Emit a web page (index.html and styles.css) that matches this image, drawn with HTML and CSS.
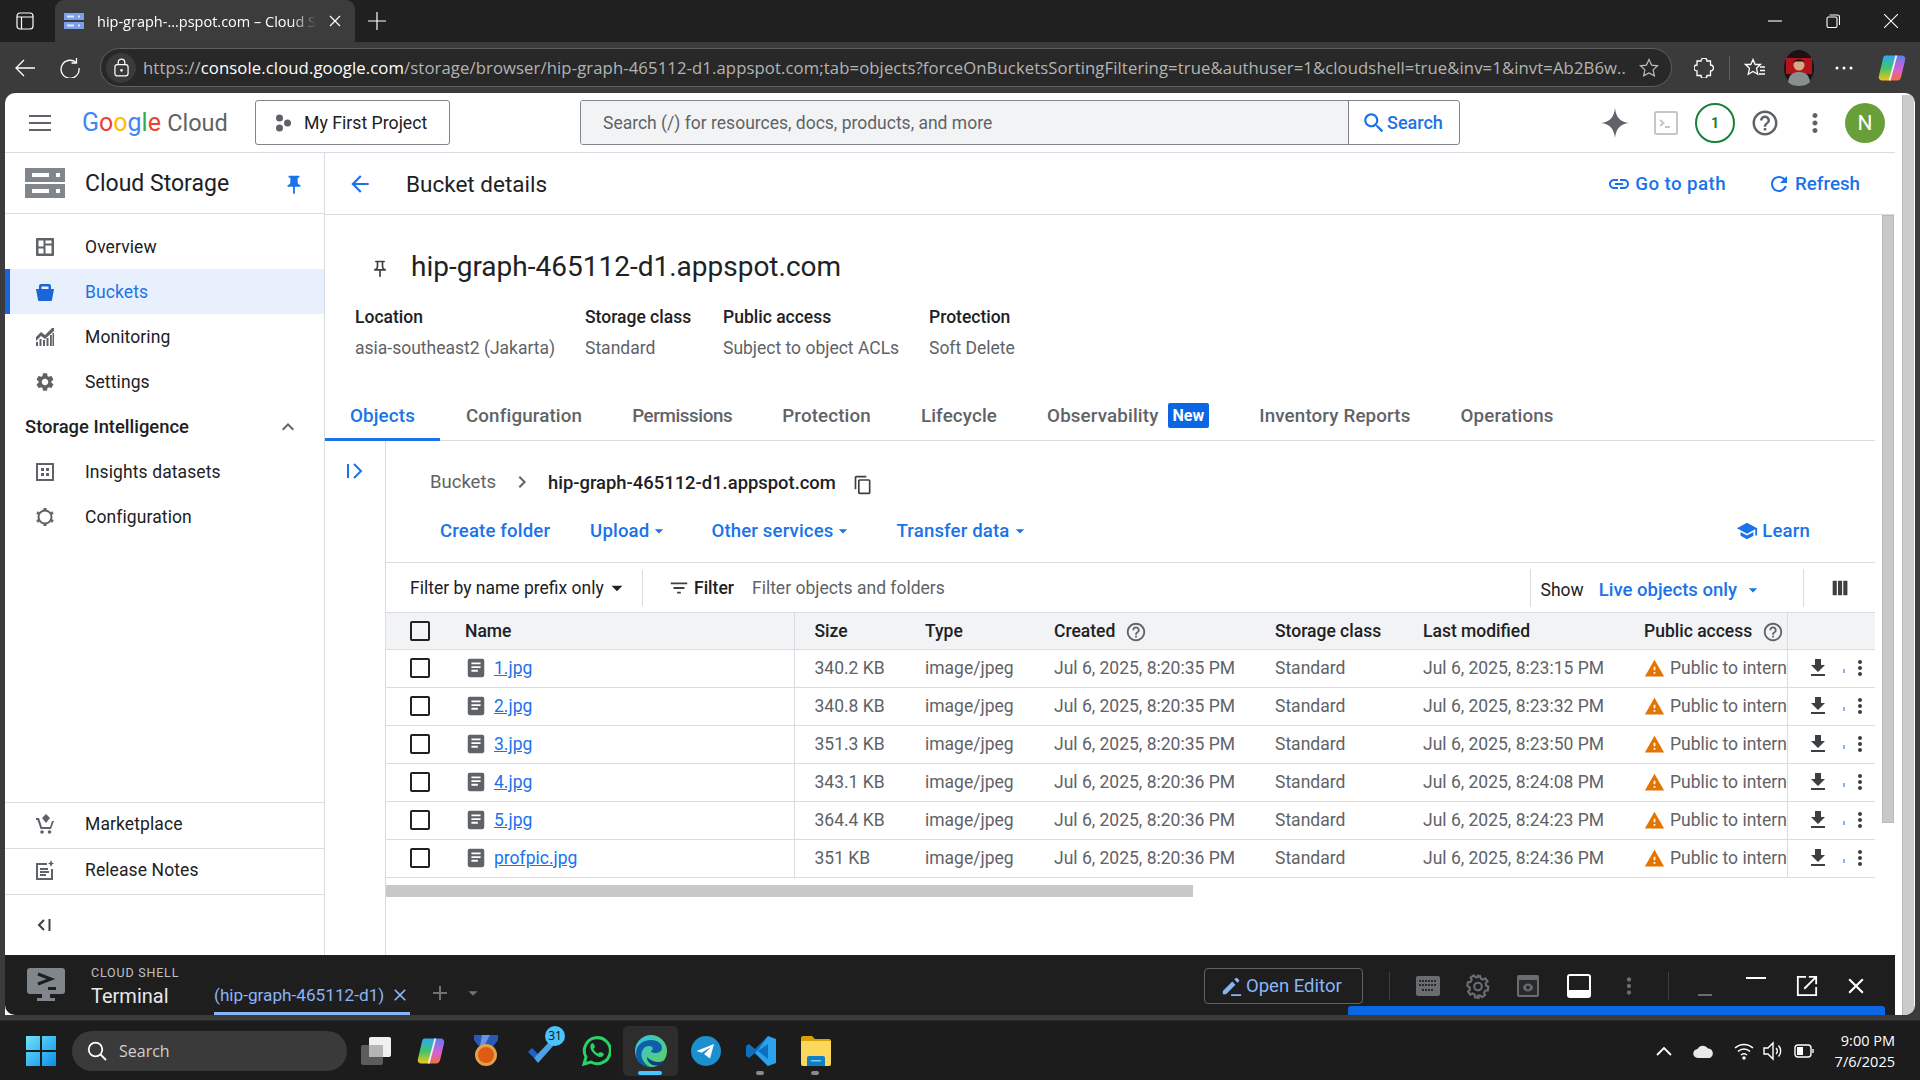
FILE: index.html
```html
<!DOCTYPE html>
<html lang="en">
<head>
    <meta charset="UTF-8">
    <title>hip-graph-465112-d1.appspot.com – Cloud Storage</title>
    <link rel="stylesheet" href="styles.css">
</head>
<body>
    <svg class="defs" width="0" height="0">
        <defs>
            <linearGradient id="cp1" x1="0" y1="0" x2="0" y2="1"><stop offset="0" stop-color="#2fa8f0"/><stop offset=".5" stop-color="#3fc46c"/><stop offset="1" stop-color="#f5c518"/></linearGradient>
            <linearGradient id="cp2" x1="0" y1="0" x2="0" y2="1"><stop offset="0" stop-color="#5f7cf2"/><stop offset=".55" stop-color="#d75fd6"/><stop offset="1" stop-color="#f2713a"/></linearGradient>
        </defs>
        <symbol id="i-copilot" viewBox="0 0 29 32"><path fill="url(#cp1)" d="M8 3h11l-7 26H5c-3 0-5-2-4-5L5 7c.5-2.500 1-4 3-4z"/><path fill="url(#cp2)" d="M19 3h5c3 0 5 2 4 5l-4 17c-.5 2.500-2 4-4 4h-8z"/><path stroke="#f4f1f6" stroke-width="1.800" d="M19 3l-7 26"/></symbol>
        <symbol id="i-more" viewBox="0 0 24 24"><path d="M12 8c1.100 0 2-.9 2-2s-.9-2-2-2-2 .9-2 2 .9 2 2 2zm0 2c-1.100 0-2 .9-2 2s.9 2 2 2 2-.9 2-2-.9-2-2-2zm0 6c-1.100 0-2 .9-2 2s.9 2 2 2 2-.9 2-2-.9-2-2-2z"/></symbol>
        <symbol id="i-help" viewBox="0 0 24 24"><path d="M11 18h2v-2h-2v2zm1-16C6.480 2 2 6.480 2 12s4.480 10 10 10 10-4.480 10-10S17.520 2 12 2zm0 18c-4.410 0-8-3.590-8-8s3.590-8 8-8 8 3.590 8 8-3.590 8-8 8zm0-14c-2.210 0-4 1.790-4 4h2c0-1.100.9-2 2-2s2 .9 2 2c0 2-3 1.750-3 5h2c0-2.250 3-2.500 3-5 0-2.210-1.790-4-4-4z"/></symbol>
        <symbol id="i-download" viewBox="0 0 24 24"><path d="M19 9h-4V3H9v6H5l7 7 7-7zM5 18v2h14v-2H5z"/></symbol>
        <symbol id="i-warning" viewBox="0 0 24 24"><path d="M1 21h22L12 2 1 21zm12-3h-2v-2h2v2zm0-4h-2v-4h2v4z"/></symbol>
        <symbol id="i-file" viewBox="0 0 24 24"><path fill-rule="evenodd" d="M5 2h14a2 2 0 0 1 2 2v16a2 2 0 0 1-2 2H5a2 2 0 0 1-2-2V4a2 2 0 0 1 2-2zm2 4v2h10V6H7zm0 4v2h10v-2H7zm0 4v2h7v-2H7z"/></symbol>
        <symbol id="i-caret" viewBox="0 0 24 24"><path d="M7 10l5 5 5-5z"/></symbol>
        <symbol id="i-close" viewBox="0 0 24 24"><path d="M19 6.410L17.590 5 12 10.590 6.410 5 5 6.410 10.590 12 5 17.590 6.410 19 12 13.410 17.590 19 19 17.590 13.410 12z"/></symbol>
        <symbol id="i-gear" viewBox="0 0 24 24"><path d="M19.140 12.940c.04-.3.06-.61.06-.94 0-.32-.02-.64-.07-.94l2.030-1.580c.18-.14.23-.41.12-.61l-1.920-3.320c-.12-.22-.37-.29-.59-.22l-2.390.96c-.5-.38-1.030-.7-1.620-.94l-.36-2.540c-.04-.24-.24-.41-.48-.41h-3.840c-.24 0-.43.17-.47.41l-.36 2.540c-.59.24-1.130.57-1.620.94l-2.390-.96c-.22-.08-.47 0-.59.22L2.740 8.870c-.12.21-.08.47.12.61l2.030 1.580c-.05.3-.09.63-.09.94s.02.64.07.94l-2.030 1.580c-.18.14-.23.41-.12.61l1.920 3.320c.12.22.37.29.59.22l2.390-.96c.5.38 1.030.7 1.620.94l.36 2.540c.05.24.24.41.48.41h3.840c.24 0 .44-.17.47-.41l.36-2.540c.59-.24 1.130-.56 1.620-.94l2.390.96c.22.08.47 0 .59-.22l1.920-3.320c.12-.22.07-.47-.12-.61l-2.010-1.580zM12 15.600c-1.980 0-3.600-1.620-3.600-3.600s1.620-3.600 3.600-3.600 3.600 1.620 3.600 3.600-1.620 3.600-3.600 3.600z"/></symbol>
    </svg>

    <div class="tabstrip">
        <svg class="tab-panel-icon" viewBox="0 0 18 18" width="18" height="18" fill="none" stroke="#fff" stroke-width="1.200"><rect x="1" y="1" width="16" height="16" rx="3"/><path d="M1 5h16M5.500 5v12"/></svg>
        <div class="tab">
            <svg viewBox="0 0 20 16" width="20" height="16"><rect width="20" height="7" fill="#7b9fe8"/><rect y="9" width="20" height="7" fill="#7b9fe8"/><rect x="3" y="2.500" width="7" height="2" fill="#dfe8fb"/><rect x="3" y="11.500" width="7" height="2" fill="#dfe8fb"/><rect x="14" y="2.500" width="2" height="2" fill="#dfe8fb"/><rect x="14" y="11.500" width="2" height="2" fill="#dfe8fb"/></svg>
            <span class="tab-title">hip-graph-...pspot.com – Cloud Storage</span>
            <svg class="tab-close" viewBox="0 0 12 12" width="12" height="12" stroke="#fff" stroke-width="1.200"><path d="M1 1l10 10M11 1L1 11"/></svg>
        </div>
        <svg class="new-tab" viewBox="0 0 18 18" width="18" height="18" stroke="#fff" stroke-width="1.200"><path d="M9 0v18M0 9h18"/></svg>
        <div class="win-controls">
            <svg viewBox="0 0 14 14" width="14" height="14" stroke="#fff" stroke-width="1.100"><path d="M0 7h14"/></svg>
            <svg viewBox="0 0 14 14" width="14" height="14" fill="none" stroke="#fff" stroke-width="1.100"><rect x="1" y="3" width="10" height="10.500" rx="1.500"/><path d="M3.500 1h8a2 2 0 0 1 2 2v8"/></svg>
            <svg viewBox="0 0 14 14" width="14" height="14" stroke="#fff" stroke-width="1.100"><path d="M0 0l14 14M14 0L0 14"/></svg>
        </div>
    </div>

    <div class="addressbar">
        <svg class="nav-back" viewBox="0 0 20 20" width="20" height="20" fill="none" stroke="#fff" stroke-width="1.300"><path d="M20 10H1M9 2l-8 8 8 8"/></svg>
        <svg class="nav-reload" viewBox="0 0 20 20" width="20" height="20" fill="none" stroke="#fff" stroke-width="1.300"><path d="M16 4.500A9 9 0 1 0 19 10"/><path d="M16.500 0v5h-5"/></svg>
        <div class="urlbox">
            <span class="lock-wrap"><svg viewBox="0 0 16 20" width="15" height="19" fill="none" stroke="#fff" stroke-width="1.300"><rect x="1" y="7" width="14" height="12" rx="2.500"/><path d="M4.500 7V4.500a3.500 3.500 0 0 1 7 0V7"/><circle cx="8" cy="13" r=".8" fill="#fff"/></svg></span>
            <span class="url"><span class="url-dim">https://</span>console.cloud.google.com<span class="url-dim">/storage/browser/hip-graph-465112-d1.appspot.com;tab=objects?forceOnBucketsSortingFiltering=true&amp;authuser=1&amp;cloudshell=true&amp;inv=1&amp;invt=Ab2B6w...</span></span>
            <svg class="url-star" viewBox="0 0 20 20" width="20" height="20" fill="none" stroke="#bdbdbd" stroke-width="1.200"><path d="M10 1.500l2.600 5.600 6 .7-4.500 4.100 1.300 6L10 15l-5.400 2.900 1.300-6L1.400 7.800l6-.7z"/></svg>
        </div>
        <div class="browser-tools">
            <svg class="tool-ext" viewBox="0 0 20 20" width="20" height="20" fill="none" stroke="#fff" stroke-width="1.300"><path d="M7 3a3 3 0 0 1 6 0h3.500v4a3 3 0 0 1 0 6v4.500H13a3 3 0 0 1-6 0H3V13a3 3 0 0 1 0-6V3z"/></svg>
            <span class="tool-sep"></span>
            <svg class="tool-fav" viewBox="0 0 22 20" width="22" height="20" fill="none" stroke="#fff" stroke-width="1.300"><path d="M9 1.500l2.200 5h5.300l-4 3.800 1.300 6L9 13.500l-4.800 2.800 1.300-6-4-3.800h5.300z"/><path d="M16 9h5M16 12.500h5M15 16h6"/></svg>
            <svg class="tool-avatar" viewBox="0 0 30 36" width="30" height="36"><ellipse cx="15" cy="18" rx="15" ry="18" fill="#1a1214"/><path d="M2 8h26v16H2z" fill="#b3141c"/><path d="M4 32c1-8 6-10 11-10s10 2 11 10c-3 3-7 4-11 4s-8-1-11-4z" fill="#87908f"/><circle cx="15" cy="15" r="5.500" fill="#d7a987"/><path d="M9.500 13c0-5 11-5 11 0l-2-1.500h-7z" fill="#201611"/></svg>
            <svg class="tool-dots" viewBox="0 0 18 4" width="18" height="4" fill="#fff"><circle cx="2" cy="2" r="1.500"/><circle cx="9" cy="2" r="1.500"/><circle cx="16" cy="2" r="1.500"/></svg>
            <svg class="tool-copilot" viewBox="0 0 29 32" width="28" height="32"><use href="#i-copilot"/></svg>
        </div>
    </div>

    <div class="window">
        <div class="window-main">
            <div class="topbar">
                <svg class="hamburger" viewBox="0 0 24 16" width="24" height="16" fill="#5f6368"><path d="M1 0h22v2H1zM1 7h22v2H1zM1 14h22v2H1z"/></svg>
                <div class="logo"><span class="lg-b">G</span><span class="lg-r">o</span><span class="lg-y">o</span><span class="lg-b">g</span><span class="lg-g">l</span><span class="lg-r">e</span> <span class="lg-cloud">Cloud</span></div>
                <button class="project-btn">
                    <svg viewBox="0 0 18 18" width="18" height="18" fill="#5f6368"><circle cx="5.500" cy="4" r="3.500"/><circle cx="13.500" cy="9" r="3.500"/><circle cx="5.500" cy="14" r="3.500"/></svg>
                    My First Project
                </button>
                <div class="searchbox">
                    <div class="search-field">Search (/) for resources, docs, products, and more</div>
                    <div class="search-btn">
                        <svg viewBox="0 0 24 24" width="26" height="26" fill="#1a73e8"><path d="M15.500 14h-.79l-.28-.27C15.410 12.590 16 11.110 16 9.500 16 5.910 13.090 3 9.500 3S3 5.910 3 9.500 5.910 16 9.500 16c1.610 0 3.090-.59 4.230-1.570l.27.28v.79l5 4.990L20.490 19l-4.990-5zm-6 0C7.010 14 5 11.990 5 9.500S7.010 5 9.500 5 14 7.010 14 9.500 11.990 14 9.500 14z"/></svg>
                        Search
                    </div>
                </div>
                <div class="top-icons">
                    <svg class="top-spark" viewBox="0 0 28 30" width="28" height="30" fill="#5f6368"><path d="M14 0c1 9 5 14 14 15-9 1-13 6-14 15-1-9-5-14-14-15 9-1 13-6 14-15z"/></svg>
                    <svg class="top-term" viewBox="0 0 24 24" width="24" height="24" fill="none" stroke="#c4c6c8" stroke-width="2"><rect x="1" y="1" width="22" height="22" rx="1.500"/><path d="M6 9l3.500 3L6 15M11 16h5"/></svg>
                    <div class="top-badge">1</div>
                    <svg class="top-help" viewBox="0 0 24 24" width="30" height="30" fill="#5f6368"><use href="#i-help"/></svg>
                    <svg class="top-more" viewBox="0 0 24 24" width="30" height="30" fill="#5f6368"><use href="#i-more"/></svg>
                    <div class="top-avatar">N</div>
                </div>
            </div>

            <div class="workspace">
                <aside class="sidebar">
                    <div class="side-head">
                        <svg viewBox="0 0 40 30" width="40" height="30"><rect width="40" height="14" fill="#80868b"/><rect y="16" width="40" height="14" fill="#80868b"/><rect x="7" y="5" width="17" height="4" fill="#fff"/><rect x="7" y="21" width="17" height="4" fill="#fff"/><rect x="31" y="5" width="4" height="4" fill="#fff"/><rect x="31" y="21" width="4" height="4" fill="#fff"/></svg>
                        <span class="side-title">Cloud Storage</span>
                        <svg class="side-pin" viewBox="0 0 24 24" width="22" height="22" fill="#1a73e8"><path d="M16 9V4h1c.55 0 1-.45 1-1s-.45-1-1-1H7c-.55 0-1 .45-1 1s.45 1 1 1h1v5c0 1.660-1.340 3-3 3v2h5.970v7l1 1 1-1v-7H19v-2c-1.660 0-3-1.340-3-3z"/></svg>
                    </div>
                    <nav class="side-nav">
                        <a class="nav-item">
                            <svg viewBox="0 0 18 18" width="18" height="18"><path fill="#5f6368" fill-rule="evenodd" d="M1 0h16a1 1 0 0 1 1 1v16a1 1 0 0 1-1 1H1a1 1 0 0 1-1-1V1a1 1 0 0 1 1-1zm1.500 2.500v6h5v-6h-5zm7 0v3h6v-3h-6zm0 5v8h6v-8h-6zm-7 3v5h5v-5h-5z"/></svg>
                            Overview
                        </a>
                        <a class="nav-item nav-active">
                            <svg viewBox="0 0 18 18" width="18" height="18" fill="#1a66d9"><path d="M0 6h18l-2 11a1 1 0 0 1-1 1H3a1 1 0 0 1-1-1z"/><path d="M3 6V3a2 2 0 0 1 2-2h8a2 2 0 0 1 2 2v3h-2.500V3.500h-7V6z"/></svg>
                            Buckets
                        </a>
                        <a class="nav-item">
                            <svg viewBox="0 0 18 18" width="18" height="18" fill="#5f6368"><path d="M0 9l5-5 4 3 7-7 2 0v3l-9 8-4-3-5 5z"/><path d="M0 14h2v4H0zM3.500 11h2v7h-2zM7 12h2v6H7zM10.500 10h2v8h-2zM14 7h1.800v11H14zM16.500 5H18v13h-1.500z"/></svg>
                            Monitoring
                        </a>
                        <a class="nav-item">
                            <svg viewBox="2 2 20 20" width="18" height="18" fill="#5f6368"><use href="#i-gear" x="0" y="0" width="24" height="24"/></svg>
                            Settings
                        </a>
                        <div class="nav-group">
                            Storage Intelligence
                            <svg viewBox="0 0 24 24" width="24" height="24" fill="#5f6368"><path d="M12 8l-6 6 1.410 1.410L12 10.830l4.590 4.580L18 14z"/></svg>
                        </div>
                        <a class="nav-item">
                            <svg viewBox="0 0 18 18" width="18" height="18"><path fill="#5f6368" fill-rule="evenodd" d="M0 0h18v18H0zM2 2v14h14V2zM5 5h3v3H5zM10 5h3v3h-3zM5 10h3v3H5zM10 10h3v3h-3z"/></svg>
                            Insights datasets
                        </a>
                        <a class="nav-item">
                            <svg viewBox="0 0 18 18" width="18" height="18" fill="none" stroke="#5f6368" stroke-width="2"><circle cx="9" cy="9" r="6.500"/><path stroke-width="3" d="M9 0v2M9 16v2M1 4.500l1.700 1M15.300 12.500l1.700 1M1 13.500l1.700-1M15.300 5.500l1.700-1"/></svg>
                            Configuration
                        </a>
                    </nav>
                    <div class="side-bottom">
                        <a class="nav-item nav-line">
                            <svg viewBox="0 0 18 20" width="18" height="20" fill="#5f6368"><path d="M10 0l4 4-4 5-4-5z"/><path d="M0 4h3l3 9h8l2-6h2l-3 8H4.500L1.500 6H0z"/><circle cx="6" cy="18" r="1.800"/><circle cx="13.500" cy="18" r="1.800"/></svg>
                            Marketplace
                        </a>
                        <a class="nav-item nav-line">
                            <svg viewBox="0 0 18 20" width="18" height="20" fill="none" stroke="#5f6368" stroke-width="2"><path d="M11 4H1v15h15V9"/><path d="M4 9h8M4 12h9M4 15h6"/><path fill="#5f6368" stroke="none" d="M15 0l1 2.500L18 3.500 16 4.500 15 7l-1-2.500-2-1 2-1z"/></svg>
                            Release Notes
                        </a>
                        <div class="side-collapse">
                            <svg viewBox="0 0 14 14" width="14" height="14" fill="none" stroke="#3c4043" stroke-width="2"><path d="M7 2L2 7l5 5M12.500 1v12"/></svg>
                        </div>
                    </div>
                </aside>

                <div class="content">
                    <div class="content-head">
                        <svg class="back" viewBox="0 0 24 24" width="26" height="26" fill="#1a73e8"><path d="M20 11H7.830l5.590-5.590L12 4l-8 8 8 8 1.410-1.410L7.830 13H20v-2z"/></svg>
                        <h1 class="page-title">Bucket details</h1>
                        <a class="head-link">
                            <svg viewBox="0 0 24 24" width="24" height="24" fill="#1a73e8"><path d="M3.900 12c0-1.710 1.390-3.100 3.100-3.100h4V7H7c-2.760 0-5 2.240-5 5s2.240 5 5 5h4v-1.900H7c-1.710 0-3.100-1.390-3.100-3.100zM8 13h8v-2H8v2zm9-6h-4v1.900h4c1.710 0 3.100 1.390 3.100 3.100s-1.390 3.100-3.100 3.100h-4V17h4c2.760 0 5-2.240 5-5s-2.240-5-5-5z"/></svg>
                            Go to path
                        </a>
                        <a class="head-link head-refresh">
                            <svg viewBox="0 0 24 24" width="24" height="24" fill="#1a73e8"><path d="M17.650 6.350C16.200 4.900 14.210 4 12 4c-4.420 0-7.990 3.580-7.990 8s3.570 8 7.990 8c3.730 0 6.840-2.550 7.730-6h-2.080c-.82 2.330-3.040 4-5.650 4-3.310 0-6-2.690-6-6s2.690-6 6-6c1.660 0 3.140.69 4.220 1.780L13 11h7V4l-2.350 2.350z"/></svg>
                            Refresh
                        </a>
                    </div>

                    <div class="content-scroll">
                        <main class="details">
                            <div class="bucket-title">
                                <svg viewBox="0 0 24 24" width="20" height="20" fill="#3c4043"><path d="M14 4v5c0 1.120.37 2.160 1 3H9c.65-.86 1-1.900 1-3V4h4m3-2H7c-.55 0-1 .45-1 1s.45 1 1 1h1v5c0 1.660-1.340 3-3 3v2h5.970v7l1 1 1-1v-7H19v-2c-1.660 0-3-1.340-3-3V4h1c.55 0 1-.45 1-1s-.45-1-1-1z"/></svg>
                                <h2>hip-graph-465112-d1.appspot.com</h2>
                            </div>
                            <div class="meta">
                                <div class="meta-item meta-location"><b>Location</b><span>asia-southeast2 (Jakarta)</span></div>
                                <div class="meta-item meta-class"><b>Storage class</b><span>Standard</span></div>
                                <div class="meta-item meta-access"><b>Public access</b><span>Subject to object ACLs</span></div>
                                <div class="meta-item"><b>Protection</b><span>Soft Delete</span></div>
                            </div>
                            <div class="tabs">
                                <a class="tab-link tab-on">Objects</a>
                                <a class="tab-link">Configuration</a>
                                <a class="tab-link tab-tight">Permissions</a>
                                <a class="tab-link">Protection</a>
                                <a class="tab-link">Lifecycle</a>
                                <a class="tab-link">Observability <span class="new-badge">New</span></a>
                                <a class="tab-link">Inventory Reports</a>
                                <a class="tab-link">Operations</a>
                            </div>

                            <div class="objects">
                                <div class="objects-rail">
                                    <svg viewBox="0 0 18 18" width="18" height="18" fill="none" stroke="#1a73e8" stroke-width="2"><path d="M2 2v14M8 2l7 7-7 7"/></svg>
                                </div>
                                <div class="objects-panel">
                                    <div class="crumbs">
                                        <span class="crumb-root">Buckets</span>
                                        <svg viewBox="0 0 24 24" width="24" height="24" fill="#5f6368"><path d="M10 6L8.590 7.410 13.170 12l-4.580 4.590L10 18l6-6z"/></svg>
                                        <span class="crumb-name">hip-graph-465112-d1.appspot.com</span>
                                        <svg class="crumb-copy" viewBox="0 0 24 24" width="20" height="20" fill="#3c4043"><path d="M16 1H4c-1.100 0-2 .9-2 2v14h2V3h12V1zm3 4H8c-1.100 0-2 .9-2 2v14c0 1.100.9 2 2 2h11c1.100 0 2-.9 2-2V7c0-1.100-.9-2-2-2zm0 16H8V7h11v14z"/></svg>
                                    </div>
                                    <div class="actions">
                                        <a class="act act-create">Create folder</a>
                                        <a class="act act-upload">Upload <svg viewBox="0 0 24 24" width="20" height="20" fill="#1a73e8"><use href="#i-caret"/></svg></a>
                                        <a class="act act-other">Other services <svg viewBox="0 0 24 24" width="20" height="20" fill="#1a73e8"><use href="#i-caret"/></svg></a>
                                        <a class="act">Transfer data <svg viewBox="0 0 24 24" width="20" height="20" fill="#1a73e8"><use href="#i-caret"/></svg></a>
                                        <a class="act act-learn">
                                            <svg viewBox="0 0 24 24" width="22" height="22" fill="#1a73e8"><path d="M5 13.180v4L12 21l7-3.820v-4L12 17l-7-3.820zM12 3L1 9l11 6 9-4.910V17h2V9L12 3z"/></svg>
                                            Learn
                                        </a>
                                    </div>
                                    <div class="filterbar">
                                        <div class="filter-mode">Filter by name prefix only <svg viewBox="0 0 24 24" width="26" height="26" fill="#202124"><use href="#i-caret"/></svg></div>
                                        <div class="filter-btn">
                                            <svg viewBox="0 0 24 24" width="22" height="22" fill="#3c4043"><path d="M10 18h4v-2h-4v2zM3 6v2h18V6H3zm3 7h12v-2H6v2z"/></svg>
                                            <b>Filter</b>
                                        </div>
                                        <div class="filter-input">Filter objects and folders</div>
                                        <div class="show">Show <span class="show-value">Live objects only <svg viewBox="0 0 24 24" width="20" height="20" fill="#1a73e8"><use href="#i-caret"/></svg></span></div>
                                        <div class="columns-btn">
                                            <svg viewBox="0 0 24 24" width="22" height="22" fill="#3c4043"><path d="M4 4h4.500v16H4zM9.800 4h4.500v16H9.800zM15.600 4h4.500v16h-4.500z"/></svg>
                                        </div>
                                    </div>
                                    <table class="objects-table">
                                        <colgroup>
                                            <col class="c-check"><col class="c-name"><col class="c-size"><col class="c-type"><col class="c-created"><col class="c-class"><col class="c-mod"><col class="c-public"><col class="c-act">
                                        </colgroup>
                                        <thead>
                                            <tr>
                                                <th class="td-check"><span class="checkbox"></span></th>
                                                <th>Name</th>
                                                <th class="td-split">Size</th>
                                                <th>Type</th>
                                                <th>Created <svg class="th-help" viewBox="0 0 24 24" width="22" height="22" fill="#5f6368"><use href="#i-help"/></svg></th>
                                                <th>Storage class</th>
                                                <th>Last modified</th>
                                                <th>Public access <svg class="th-help" viewBox="0 0 24 24" width="22" height="22" fill="#5f6368"><use href="#i-help"/></svg></th>
                                                <th class="td-split"></th>
                                            </tr>
                                        </thead>
                                        <tbody>
                                            <tr>
                                                <td class="td-check"><span class="checkbox"></span></td>
                                                <td><div class="file"><svg viewBox="0 0 24 24" width="22" height="22" fill="#5f6368"><use href="#i-file"/></svg><a>1.jpg</a></div></td>
                                                <td class="td-split">340.2 KB</td><td>image/jpeg</td><td>Jul 6, 2025, 8:20:35 PM</td><td>Standard</td><td>Jul 6, 2025, 8:23:15 PM</td>
                                                <td class="td-public"><svg viewBox="0 0 24 24" width="21" height="21" fill="#e37400"><use href="#i-warning"/></svg>Public to internet</td>
                                                <td class="td-split"><div class="row-acts"><svg viewBox="0 0 24 24" width="24" height="24" fill="#3c4043"><use href="#i-download"/></svg><i class="speck"></i><svg viewBox="0 0 24 24" width="24" height="24" fill="#3c4043"><use href="#i-more"/></svg></div></td>
                                            </tr>
                                            <tr>
                                                <td class="td-check"><span class="checkbox"></span></td>
                                                <td><div class="file"><svg viewBox="0 0 24 24" width="22" height="22" fill="#5f6368"><use href="#i-file"/></svg><a>2.jpg</a></div></td>
                                                <td class="td-split">340.8 KB</td><td>image/jpeg</td><td>Jul 6, 2025, 8:20:35 PM</td><td>Standard</td><td>Jul 6, 2025, 8:23:32 PM</td>
                                                <td class="td-public"><svg viewBox="0 0 24 24" width="21" height="21" fill="#e37400"><use href="#i-warning"/></svg>Public to internet</td>
                                                <td class="td-split"><div class="row-acts"><svg viewBox="0 0 24 24" width="24" height="24" fill="#3c4043"><use href="#i-download"/></svg><i class="speck"></i><svg viewBox="0 0 24 24" width="24" height="24" fill="#3c4043"><use href="#i-more"/></svg></div></td>
                                            </tr>
                                            <tr>
                                                <td class="td-check"><span class="checkbox"></span></td>
                                                <td><div class="file"><svg viewBox="0 0 24 24" width="22" height="22" fill="#5f6368"><use href="#i-file"/></svg><a>3.jpg</a></div></td>
                                                <td class="td-split">351.3 KB</td><td>image/jpeg</td><td>Jul 6, 2025, 8:20:35 PM</td><td>Standard</td><td>Jul 6, 2025, 8:23:50 PM</td>
                                                <td class="td-public"><svg viewBox="0 0 24 24" width="21" height="21" fill="#e37400"><use href="#i-warning"/></svg>Public to internet</td>
                                                <td class="td-split"><div class="row-acts"><svg viewBox="0 0 24 24" width="24" height="24" fill="#3c4043"><use href="#i-download"/></svg><i class="speck"></i><svg viewBox="0 0 24 24" width="24" height="24" fill="#3c4043"><use href="#i-more"/></svg></div></td>
                                            </tr>
                                            <tr>
                                                <td class="td-check"><span class="checkbox"></span></td>
                                                <td><div class="file"><svg viewBox="0 0 24 24" width="22" height="22" fill="#5f6368"><use href="#i-file"/></svg><a>4.jpg</a></div></td>
                                                <td class="td-split">343.1 KB</td><td>image/jpeg</td><td>Jul 6, 2025, 8:20:36 PM</td><td>Standard</td><td>Jul 6, 2025, 8:24:08 PM</td>
                                                <td class="td-public"><svg viewBox="0 0 24 24" width="21" height="21" fill="#e37400"><use href="#i-warning"/></svg>Public to internet</td>
                                                <td class="td-split"><div class="row-acts"><svg viewBox="0 0 24 24" width="24" height="24" fill="#3c4043"><use href="#i-download"/></svg><i class="speck"></i><svg viewBox="0 0 24 24" width="24" height="24" fill="#3c4043"><use href="#i-more"/></svg></div></td>
                                            </tr>
                                            <tr>
                                                <td class="td-check"><span class="checkbox"></span></td>
                                                <td><div class="file"><svg viewBox="0 0 24 24" width="22" height="22" fill="#5f6368"><use href="#i-file"/></svg><a>5.jpg</a></div></td>
                                                <td class="td-split">364.4 KB</td><td>image/jpeg</td><td>Jul 6, 2025, 8:20:36 PM</td><td>Standard</td><td>Jul 6, 2025, 8:24:23 PM</td>
                                                <td class="td-public"><svg viewBox="0 0 24 24" width="21" height="21" fill="#e37400"><use href="#i-warning"/></svg>Public to internet</td>
                                                <td class="td-split"><div class="row-acts"><svg viewBox="0 0 24 24" width="24" height="24" fill="#3c4043"><use href="#i-download"/></svg><i class="speck"></i><svg viewBox="0 0 24 24" width="24" height="24" fill="#3c4043"><use href="#i-more"/></svg></div></td>
                                            </tr>
                                            <tr>
                                                <td class="td-check"><span class="checkbox"></span></td>
                                                <td><div class="file"><svg viewBox="0 0 24 24" width="22" height="22" fill="#5f6368"><use href="#i-file"/></svg><a>profpic.jpg</a></div></td>
                                                <td class="td-split">351 KB</td><td>image/jpeg</td><td>Jul 6, 2025, 8:20:36 PM</td><td>Standard</td><td>Jul 6, 2025, 8:24:36 PM</td>
                                                <td class="td-public"><svg viewBox="0 0 24 24" width="21" height="21" fill="#e37400"><use href="#i-warning"/></svg>Public to internet</td>
                                                <td class="td-split"><div class="row-acts"><svg viewBox="0 0 24 24" width="24" height="24" fill="#3c4043"><use href="#i-download"/></svg><i class="speck"></i><svg viewBox="0 0 24 24" width="24" height="24" fill="#3c4043"><use href="#i-more"/></svg></div></td>
                                            </tr>
                                        </tbody>
                                    </table>
                                    <div class="table-scroll"><div class="table-thumb"></div></div>
                                </div>
                            </div>
                        </main>
                        <div class="content-thumb"></div>
                    </div>
                </div>
            </div>

            <div class="shell">
                <svg class="shell-logo" viewBox="0 0 38 34" width="38" height="34"><path fill="#80868b" d="M3 0h32a3 3 0 0 1 3 3v20a3 3 0 0 1-3 3H23v4h5v3H10v-3h5v-4H3a3 3 0 0 1-3-3V3a3 3 0 0 1 3-3z"/><path fill="none" stroke="#1e1e1e" stroke-width="3" d="M11 6l13 5-13 5"/><path fill="#1e1e1e" d="M21 19h8v3h-8z"/></svg>
                <div class="shell-label"><small>CLOUD SHELL</small><span>Terminal</span></div>
                <div class="shell-tab">(hip-graph-465112-d1) <svg viewBox="0 0 24 24" width="20" height="20" fill="#8ab4f8"><use href="#i-close"/></svg></div>
                <svg class="shell-plus" viewBox="0 0 24 24" width="24" height="24" fill="#6f7377"><path d="M19 13h-6v6h-2v-6H5v-2h6V5h2v6h6v2z"/></svg>
                <svg class="shell-caret" viewBox="0 0 24 24" width="22" height="22" fill="#6f7377"><use href="#i-caret"/></svg>
                <div class="shell-tools">
                    <button class="editor-btn">
                        <svg viewBox="0 0 24 24" width="22" height="22" fill="#8ab4f8"><path d="M2 17.500V21h3.500L15.800 10.700l-3.500-3.500L2 17.500zM19.700 6.800a1 1 0 0 0 0-1.400l-2.100-2.100a1 1 0 0 0-1.400 0l-1.700 1.700 3.500 3.500 1.700-1.700zM11 21h11v2H11z"/></svg>
                        Open Editor
                    </button>
                    <span class="shell-sep"></span>
                    <svg class="st-key" viewBox="0 0 24 20" width="24" height="20"><rect width="24" height="20" rx="2" fill="#6a6d70"/><path stroke="#2a2a2a" stroke-width="2" stroke-dasharray="2 1" d="M3 5h18M3 9h18M6 14h12"/></svg>
                    <svg class="st-gear" viewBox="0 0 24 24" width="26" height="26" fill="none" stroke="#6a6d70" stroke-width="2"><path d="M12 2.500l2 .3.700 2.500 1.800.8 2.300-1.200 2 2.800-1.700 1.800.3 2 2.200 1.300-.6 3.300-2.500.3-1 1.700 1 2.300-2.800 1.900-1.900-1.700-2 .3L12.500 23l-3.300-.6-.4-2.500-1.700-1-2.300 1-1.900-2.800 1.700-1.900-.3-2-2.200-1.300.6-3.300 2.500-.4 1-1.700-1-2.300 2.800-1.900 1.900 1.700 2-.3z"/><circle cx="12" cy="12.500" r="3.500"/></svg>
                    <svg class="st-view" viewBox="0 0 22 22" width="22" height="22"><rect width="22" height="22" rx="2" fill="#6a6d70"/><rect x="2" y="5" width="18" height="15" fill="#2a2a2a"/><path fill="#6a6d70" d="M11 8.500c3 0 5 3 5 4s-2 4-5 4-5-3-5-4 2-4 5-4z"/><circle cx="11" cy="12.500" r="2" fill="#2a2a2a"/></svg>
                    <svg class="st-panel" viewBox="0 0 24 24" width="24" height="24" fill="none" stroke="#fff" stroke-width="2"><rect x="1" y="1" width="22" height="22" rx="2"/><path fill="#fff" d="M3 17h18v5H3z"/></svg>
                    <svg class="st-more" viewBox="0 0 24 24" width="26" height="26" fill="#6a6d70"><use href="#i-more"/></svg>
                    <span class="shell-sep"></span>
                    <span class="st-min"></span>
                    <span class="st-top"></span>
                    <svg class="st-pop" viewBox="0 0 24 24" width="22" height="22" fill="none" stroke="#fff" stroke-width="2"><path d="M11 2H2v20h20v-9M14 2h8v8M22 2L9 15"/></svg>
                    <svg class="st-close" viewBox="0 0 24 24" width="26" height="26" fill="#fff"><use href="#i-close"/></svg>
                    <div class="shell-progress"></div>
                </div>
            </div>
        </div>
        <div class="window-scroll"></div>
    </div>

    <div class="taskbar">
        <svg class="win-logo" viewBox="0 0 30 30" width="30" height="30"><defs><linearGradient id="wl" x1="0" y1="0" x2="1" y2="1"><stop offset="0" stop-color="#6fe3fb"/><stop offset="1" stop-color="#0a8fe8"/></linearGradient></defs><path fill="url(#wl)" d="M0 0h14v14H0zM16 0h14v14H16zM0 16h14v14H0zM16 16h14v14H16z"/></svg>
        <div class="task-search">
            <svg viewBox="0 0 20 20" width="20" height="20" fill="none" stroke="#fff" stroke-width="1.800"><circle cx="8.500" cy="8.500" r="6.800"/><path d="M13.500 13.500l5.500 5.500"/></svg>
            Search
        </div>
        <div class="task-apps">
            <div class="app"><svg viewBox="0 0 30 28" width="30" height="28"><rect y="8" width="22" height="20" rx="2" fill="#5c5c5c"/><rect x="8" width="22" height="20" rx="2" fill="#f0f0f0"/><rect x="8" y="8" width="14" height="12" fill="#b5b5b5"/></svg></div>
            <div class="app"><svg viewBox="0 0 29 32" width="28" height="32"><use href="#i-copilot"/></svg></div>
            <div class="app"><svg viewBox="0 0 26 32" width="26" height="32"><path d="M1 0h24v5l-6 8H7L1 5z" fill="#2a58b8"/><path d="M9 0h8L11 11H7z" fill="#6c93dd"/><circle cx="13" cy="20" r="11" fill="#e3a14a"/><circle cx="13" cy="20" r="8" fill="#de5b14"/></svg></div>
            <div class="app app-todo">
                <svg viewBox="0 0 26 24" width="26" height="24"><path d="M0 13l4-4 6 6-4 4z" fill="#1e62c8"/><path d="M6 19l16-17 4 4-16 18z" fill="#4aa3ea"/></svg>
                <span class="todo-badge">31</span>
            </div>
            <div class="app"><svg viewBox="0 0 30 32" width="30" height="32" fill="none"><path stroke="#25d366" stroke-width="3" d="M3 29l2-7A13 13 0 1 1 10 27z"/><path fill="#25d366" d="M10 9c1-1 2-1 3 0l1 3-1.500 2c1 2 2.500 3.500 4.500 4.500l2-1.500 3 1c1 1 1 2 0 3-2 2-5 1-8-1.500S8 13 10 9z"/></svg></div>
            <div class="app app-on">
                <svg viewBox="0 0 32 32" width="32" height="32"><defs><linearGradient id="ed" x1="0" y1="0" x2="1" y2="1"><stop offset="0" stop-color="#2fc3e8"/><stop offset="1" stop-color="#62d05a"/></linearGradient></defs><circle cx="16" cy="16" r="16" fill="url(#ed)"/><path fill="#0f5fa8" d="M1 19C1 9 9 5 16 5c6 0 11 3 11 8 0 3-3 5-7 5-2 0-4-1-4-2 2-1 3-4-1-5-6-1-10 6-8 12 1 3 4 8 9 9C8 32 1 27 1 19z"/><path fill="#0a3f7c" d="M12 22c0 6 6 10 12 8 2-.5 5-3 6-5-3 2-8 3-12 1-3-1-5-3-6-4z"/></svg>
                <span class="app-pill"></span>
            </div>
            <div class="app"><svg viewBox="0 0 30 30" width="30" height="30"><circle cx="15" cy="15" r="15" fill="#1c8fcf"/><path fill="#fff" d="M23 8L5.500 15l5 1.800L20 11l-7 7 6 4.500z"/></svg></div>
            <div class="app">
                <svg viewBox="0 0 30 32" width="30" height="32"><path fill="#0e6fbd" d="M22 1L9 14 3 9 0 11v10l3 2 6-5 13 13z"/><path fill="#2aa3ec" d="M22 1l8 3v24l-8 3V9l-10 7 10 8V31L9 18l4-4z"/></svg>
                <span class="app-dot"></span>
            </div>
            <div class="app">
                <svg viewBox="0 0 30 30" width="30" height="30"><path fill="#d9a008" d="M0 2a2 2 0 0 1 2-2h9l3 3h14a2 2 0 0 1 2 2v3H0z"/><path fill="#fbd75b" d="M0 5h30v23a2 2 0 0 1-2 2H2a2 2 0 0 1-2-2z"/><path fill="#0f7fc6" d="M6 22a2 2 0 0 1 2-2h14a2 2 0 0 1 2 2v8H6z"/><path fill="#7cc7f0" d="M10 24h10v1.500H10z"/></svg>
                <span class="app-dot"></span>
            </div>
        </div>
        <div class="tray">
            <svg viewBox="0 0 16 10" width="16" height="10" fill="none" stroke="#fff" stroke-width="1.800"><path d="M1 9l7-7 7 7"/></svg>
            <svg class="tray-cloud" viewBox="0 0 22 14" width="22" height="14" fill="#e8e8e8"><path d="M5 14a4.500 4.500 0 0 1-.5-9A6 6 0 0 1 15 4.500 5 5 0 0 1 17 14z"/></svg>
            <svg class="tray-wifi" viewBox="0 0 20 20" width="20" height="20" fill="none" stroke="#fff" stroke-width="1.500"><path d="M1 7a13 13 0 0 1 18 0M4 10.500a8.500 8.500 0 0 1 12 0M7 14a4 4 0 0 1 6 0"/><circle cx="10" cy="17" r="1" fill="#fff"/></svg>
            <svg class="tray-vol" viewBox="0 0 20 20" width="20" height="20" fill="none" stroke="#fff" stroke-width="1.400"><path d="M1 7h4l5-5v16l-5-5H1z"/><path d="M13 7a4 4 0 0 1 0 6M15.500 4.500a8 8 0 0 1 0 11"/></svg>
            <svg class="tray-bat" viewBox="0 0 20 14" width="20" height="14" fill="none" stroke="#fff" stroke-width="1.400"><rect x="1" y="1" width="16" height="12" rx="3"/><path d="M19 5v4"/><rect x="3" y="3" width="6" height="8" fill="#fff" stroke="none"/></svg>
            <div class="clock"><span>9:00 PM</span><span>7/6/2025</span></div>
        </div>
    </div>
</body>
</html>
```

FILE: styles.css
```css
* {
    box-sizing: border-box;
    margin: 0;
    padding: 0;
}
body {
    width: 1920px;
    height: 1080px;
    overflow: hidden;
    background-color: #3b3b3b;
    font-family: Roboto, sans-serif;
    font-size: 17.5px;
    color: #202124;
}
svg {
    display: block;
    flex-shrink: 0;
}
.defs {
    position: absolute;
}
button {
    font-family: inherit;
    background: none;
}

/* browser chrome */
.tabstrip {
    display: flex;
    align-items: center;
    height: 42px;
    background-color: #202020;
    color: #fff;
    font-family: "Open Sans", sans-serif;
}
.tab-panel-icon {
    margin-left: 16px;
}
.tab {
    display: flex;
    align-items: center;
    width: 300px;
    height: 42px;
    margin-left: 21px;
    padding: 0 14px 0 9px;
    background-color: #3c3c3c;
    border-radius: 9px 9px 0 0;
}
.tab-title {
    width: 224px;
    margin-left: 13px;
    font-size: 14.5px;
    white-space: nowrap;
    overflow: hidden;
    -webkit-mask-image: linear-gradient(90deg, #000 88%, transparent);
    mask-image: linear-gradient(90deg, #000 88%, transparent);
}
.tab-close {
    margin-left: 12px;
}
.new-tab {
    margin-left: 13px;
}
.win-controls {
    display: flex;
    margin-left: auto;
    margin-right: 22px;
    gap: 44px;
}
.addressbar {
    display: flex;
    align-items: center;
    height: 51px;
    background-color: #3b3b3b;
}
.nav-back {
    margin-left: 15px;
}
.nav-reload {
    margin-left: 25px;
}
.urlbox {
    display: flex;
    align-items: center;
    width: 1572px;
    height: 39px;
    margin-left: 20px;
    padding-left: 5px;
    background-color: #282828;
    border: 1px solid #5f5f5f;
    border-radius: 20px;
}
.lock-wrap {
    display: flex;
    justify-content: center;
    align-items: center;
    width: 30px;
    height: 30px;
    background-color: #3a3a3a;
    border-radius: 50%;
}
.url {
    width: 1484px;
    margin-left: 7px;
    font-family: "Open Sans", sans-serif;
    font-size: 16.7px;
    letter-spacing: 0.1px;
    color: #fff;
    white-space: nowrap;
    overflow: hidden;
}
.url-dim {
    color: #b4b4b4;
}
.url-star {
    margin-left: 12px;
}
.browser-tools {
    display: flex;
    align-items: center;
}
.tool-ext {
    margin-left: 22px;
}
.tool-sep {
    width: 1px;
    height: 24px;
    margin-left: 15px;
    background-color: #5f5f5f;
}
.tool-fav {
    margin-left: 14px;
}
.tool-avatar {
    margin-left: 18px;
}
.tool-dots {
    margin-left: 21px;
}
.tool-copilot {
    margin-left: 25px;
}

/* page */
.window {
    display: flex;
    width: 1910px;
    height: 922px;
    margin-left: 5px;
    background-color: #fff;
    border-radius: 10px 10px 10px 0;
    overflow: hidden;
}
.window-main {
    display: flex;
    flex-direction: column;
    width: 1890px;
}
.window-scroll {
    width: 12px;
    margin-left: 7px;
    margin-top: 2px;
    background-color: #cbcbcb;
    border-left: 1px solid #b9b9b9;
}
.topbar {
    display: flex;
    align-items: center;
    flex-shrink: 0;
    height: 60px;
    border-bottom: 1px solid #dadce0;
}
.hamburger {
    margin-left: 23px;
}
.logo {
    width: 173px;
    margin-left: 30px;
    font-size: 25px;
    white-space: nowrap;
}
.lg-b { color: #4285f4; }
.lg-r { color: #ea4335; }
.lg-y { color: #fbbc05; }
.lg-g { color: #34a853; }
.lg-cloud {
    color: #5f6368;
    font-size: 23.5px;
}
.project-btn {
    display: flex;
    align-items: center;
    gap: 12px;
    width: 195px;
    height: 45px;
    padding-left: 18px;
    font-size: 17.7px;
    color: #202124;
    border: 1px solid #80868b;
    border-radius: 3px;
}
.searchbox {
    display: flex;
    width: 880px;
    height: 45px;
    margin-left: 130px;
    border: 1px solid #80868b;
    border-radius: 3px;
    overflow: hidden;
}
.search-field {
    display: flex;
    align-items: center;
    width: 768px;
    padding-left: 22px;
    background-color: #f1f3f4;
    color: #5f6368;
    border-right: 1px solid #80868b;
}
.search-btn {
    display: flex;
    align-items: center;
    flex: 1;
    padding-left: 12px;
    color: #1a73e8;
    font-size: 18px;
    font-weight: 500;
}
.top-icons {
    display: flex;
    align-items: center;
    margin-left: 141px;
}
.top-term {
    margin-left: 25px;
}
.top-badge {
    display: flex;
    justify-content: center;
    align-items: center;
    width: 40px;
    height: 40px;
    margin-left: 17px;
    border: 2.5px solid #188038;
    border-radius: 50%;
    font-size: 14px;
    font-weight: 700;
    color: #188038;
}
.top-help {
    margin-left: 15px;
}
.top-more {
    margin-left: 20px;
}
.top-avatar {
    display: flex;
    justify-content: center;
    align-items: center;
    width: 40px;
    height: 40px;
    margin-left: 15px;
    background-color: #689f38;
    border-radius: 50%;
    color: #fff;
    font-size: 21px;
}

.workspace {
    display: flex;
    height: 802px;
}
.sidebar {
    display: flex;
    flex-direction: column;
    flex-shrink: 0;
    width: 320px;
    border-right: 1px solid #dadce0;
}
.side-head {
    display: flex;
    align-items: center;
    height: 61px;
    padding-left: 20px;
    border-bottom: 1px solid #dadce0;
}
.side-title {
    margin-left: 20px;
    font-size: 23px;
}
.side-pin {
    margin-left: auto;
    margin-right: 19px;
    margin-top: 3px;
}
.side-nav {
    padding-top: 10px;
}
.nav-item {
    display: flex;
    align-items: center;
    gap: 31px;
    height: 45px;
    padding-left: 31px;
    letter-spacing: 0.1px;
}
.nav-active {
    background-color: #e8f0fe;
    color: #1a73e8;
    border-left: 5px solid #1a66d9;
    padding-left: 26px;
}
.nav-group {
    display: flex;
    align-items: center;
    justify-content: space-between;
    height: 45px;
    padding: 0 24px 0 20px;
    font-size: 18.4px;
    font-weight: 500;
}
.side-bottom {
    margin-top: auto;
}
.nav-line {
    height: 46px;
    padding-bottom: 3px;
    border-top: 1px solid #dadce0;
}
.side-collapse {
    display: flex;
    align-items: center;
    height: 61px;
    padding-left: 32px;
    border-top: 1px solid #dadce0;
}

.content {
    display: flex;
    flex-direction: column;
    width: 1570px;
}
.content-head {
    display: flex;
    align-items: center;
    flex-shrink: 0;
    height: 62px;
    padding-left: 22px;
    border-bottom: 1px solid #dadce0;
}
.page-title {
    margin-left: 33px;
    font-size: 22.5px;
    font-weight: 400;
}
.head-link {
    display: flex;
    align-items: center;
    gap: 4px;
    margin-left: auto;
    color: #1a73e8;
    font-size: 18.75px;
    font-weight: 500;
    letter-spacing: 0.4px;
}
.head-refresh {
    margin-left: 41px;
    margin-right: 35px;
    letter-spacing: 0;
}
.content-scroll {
    display: flex;
    flex: 1;
    min-height: 0;
}
.details {
    display: flex;
    flex-direction: column;
    width: 1550px;
}
.content-thumb {
    width: 12px;
    height: 608px;
    margin-left: 7px;
    background-color: #c8c8c8;
    border: 1px solid #b9b9b9;
}
.bucket-title {
    display: flex;
    align-items: center;
    height: 35px;
    margin-top: 34px;
    padding-left: 45px;
}
.bucket-title svg {
    margin-top: 4px;
}
.bucket-title h2 {
    margin-left: 21px;
    font-size: 28px;
    font-weight: 400;
}
.meta {
    display: flex;
    margin-top: 23px;
    padding-left: 30px;
}
.meta-item {
    display: flex;
    flex-direction: column;
    gap: 11px;
}
.meta-item b {
    font-weight: 500;
}
.meta-item span {
    color: #5f6368;
}
.meta-location { width: 230px; }
.meta-class { width: 138px; }
.meta-access { width: 206px; }
.tabs {
    display: flex;
    height: 50px;
    margin-top: 33px;
    border-bottom: 1px solid #dadce0;
    flex-shrink: 0;
}
.tab-link {
    display: flex;
    align-items: center;
    gap: 9px;
    margin-bottom: -1px;
    padding: 2px 25px 0;
    color: #5f6368;
    font-size: 18.75px;
    font-weight: 500;
    letter-spacing: 0.15px;
    border-bottom: 3px solid transparent;
}
.tab-on {
    color: #1a73e8;
    border-bottom-color: #1a73e8;
}
.tab-on + .tab-link {
    padding-left: 26px;
}
.tab-tight {
    letter-spacing: -0.4px;
}
.new-badge {
    padding: 3px 5px;
    background-color: #0b66e4;
    border-radius: 2px;
    color: #fff;
    font-size: 16px;
    font-weight: 700;
    letter-spacing: 0;
}
.objects {
    display: flex;
    flex: 1;
    min-height: 0;
}
.objects-rail {
    flex-shrink: 0;
    width: 60px;
    padding: 21px 0 0 21px;
}
.objects-panel {
    flex: 1;
    min-width: 0;
    border-left: 1px solid #dadce0;
}
.crumbs {
    display: flex;
    align-items: center;
    height: 34px;
    margin-top: 24px;
    padding-left: 44px;
}
.crumb-root {
    color: #5f6368;
    font-size: 18.5px;
}
.crumbs > svg {
    margin-left: 14px;
}
.crumb-name {
    margin-left: 14px;
    font-size: 18.4px;
    font-weight: 500;
}
.crumbs .crumb-copy {
    margin-left: 17px;
    margin-top: 5px;
}
.actions {
    display: flex;
    align-items: center;
    height: 44px;
    margin-top: 10px;
    margin-bottom: 9px;
    padding-left: 54px;
}
.act {
    display: flex;
    align-items: center;
    color: #1a73e8;
    font-size: 18.6px;
    font-weight: 500;
    letter-spacing: 0.15px;
    white-space: nowrap;
}
.act-create { margin-right: 40px; }
.act-upload { margin-right: 42px; }
.act-other { margin-right: 43px; }
.act-learn {
    gap: 4px;
    margin-left: auto;
    margin-right: 65px;
}
.filterbar {
    display: flex;
    align-items: center;
    height: 51px;
    border-top: 1px solid #dadce0;
    border-bottom: 1px solid #dadce0;
}
.filter-mode {
    display: flex;
    align-items: center;
    width: 257px;
    height: 36px;
    padding-left: 24px;
    border-right: 1px solid #dadce0;
}
.filter-btn {
    display: flex;
    align-items: center;
    gap: 4px;
    margin-left: 25px;
}
.filter-btn b {
    font-weight: 500;
}
.filter-input {
    margin-left: 18px;
    color: #5f6368;
}
.show {
    display: flex;
    align-items: center;
    height: 38px;
    margin-left: auto;
    padding-left: 10px;
    padding-top: 4px;
    border-left: 1px solid #dadce0;
}
.show-value {
    display: flex;
    align-items: center;
    gap: 6px;
    margin-left: 15px;
    color: #1a73e8;
    font-size: 18.5px;
    font-weight: 500;
}
.columns-btn {
    display: flex;
    align-items: center;
    height: 38px;
    margin-left: 40px;
    margin-right: 24px;
    padding-left: 25px;
    border-left: 1px solid #dadce0;
}
.objects-table {
    width: 1489px;
    table-layout: fixed;
    border-collapse: collapse;
}
.c-check { width: 59px; }
.c-name { width: 349px; }
.c-size { width: 111px; }
.c-type { width: 129px; }
.c-created { width: 221px; }
.c-class { width: 148px; }
.c-mod { width: 221px; }
.c-public { width: 163px; }
.c-act { width: 88px; }
.objects-table th {
    height: 36px;
    padding-left: 20px;
    background-color: #f1f3f4;
    text-align: left;
    font-weight: 500;
    white-space: nowrap;
    border-bottom: 1px solid #dadce0;
}
.objects-table td {
    height: 38px;
    padding-left: 20px;
    color: #5f6368;
    white-space: nowrap;
    overflow: hidden;
    border-bottom: 1px solid #dadce0;
}
.objects-table .td-check {
    padding-left: 24px;
}
.objects-table .td-split {
    border-left: 1px solid #dadce0;
}
.th-help {
    display: inline-block;
    vertical-align: -2px;
    margin: -4px 0 -4px 5px;
}
.checkbox {
    display: block;
    width: 20px;
    height: 20px;
    border: 2px solid #202124;
    border-radius: 2px;
}
.file {
    display: flex;
    align-items: center;
    gap: 7px;
}
.file a {
    color: #1a73e8;
    text-decoration: underline;
}
.objects-table .td-public {
    padding-left: 20px;
}
.td-public svg {
    display: inline-block;
    vertical-align: -5px;
    margin-right: 5px;
}
.objects-table .td-split:last-child {
    padding-left: 18px;
}
.row-acts {
    display: flex;
    align-items: center;
    width: 68px;
}
.speck {
    width: 2px;
    height: 4px;
    margin-left: 13px;
    margin-top: 5px;
    background-color: #8ab4f8;
}
.row-acts svg:last-child {
    margin-left: 3px;
}
.table-scroll {
    height: 12px;
    margin-top: 7px;
}
.table-thumb {
    width: 807px;
    height: 12px;
    background-color: #c8c8c8;
}

/* cloud shell */
.shell {
    display: flex;
    align-items: center;
    flex-shrink: 0;
    height: 60px;
    background-color: #1e1e1e;
    color: #e8eaed;
    border-bottom-left-radius: 10px;
}
.shell-logo {
    margin-left: 22px;
}
.shell-label {
    display: flex;
    flex-direction: column;
    width: 123px;
    margin-left: 26px;
    padding-top: 2px;
}
.shell-label small {
    font-size: 12.5px;
    letter-spacing: 0.8px;
    color: #bdc1c6;
}
.shell-label span {
    margin-top: 4px;
    font-size: 20px;
}
.shell-tab {
    display: flex;
    align-items: center;
    gap: 6px;
    width: 196px;
    height: 60px;
    padding: 22px 0 0 0;
    color: #8ab4f8;
    font-size: 17.2px;
    white-space: nowrap;
    border-bottom: 3px solid #8ab4f8;
}
.shell-plus {
    margin-left: 18px;
    margin-top: 16px;
}
.shell-caret {
    margin-left: 10px;
    margin-top: 16px;
}
.shell-tools {
    display: flex;
    align-items: center;
    position: relative;
    height: 60px;
    margin-left: 720px;
    padding-top: 2px;
}
.editor-btn {
    display: flex;
    align-items: center;
    gap: 3px;
    width: 159px;
    height: 36px;
    padding-left: 16px;
    font-size: 18.5px;
    color: #8ab4f8;
    border: 1px solid #5f6368;
    border-radius: 4px;
}
.shell-sep {
    width: 1px;
    height: 28px;
    margin-left: 26px;
    background-color: #3c4043;
}
.st-key { margin-left: 26px; }
.st-gear { margin-left: 25px; }
.st-view { margin-left: 26px; }
.st-panel { margin-left: 28px; }
.st-more { margin-left: 25px; }
.st-min {
    width: 14px;
    height: 2px;
    margin-left: 29px;
    margin-top: 18px;
    background-color: #6a6d70;
}
.st-top {
    width: 20px;
    height: 2px;
    margin-left: 34px;
    margin-top: -16px;
    background-color: #fff;
}
.st-pop { margin-left: 30px; }
.st-close { margin-left: 25px; }
/* progress strip lies over the bottom edge of the shell */
.shell-progress {
    position: absolute;
    left: 144px;
    width: 537px;
    bottom: 0;
    height: 9px;
    background-color: #0b66e4;
    border-radius: 3px 3px 0 0;
}

/* windows taskbar */
.taskbar {
    display: flex;
    align-items: center;
    height: 60px;
    margin-top: 5px;
    background-color: #1c1c1c;
    color: #fff;
    font-family: "Open Sans", sans-serif;
    border-top: 1px solid #2b2b2b;
}
.win-logo {
    margin-left: 26px;
}
.task-search {
    display: flex;
    align-items: center;
    gap: 12px;
    width: 275px;
    height: 40px;
    margin-left: 16px;
    padding-left: 15px;
    background-color: #3a3a3a;
    border-radius: 20px;
    color: #d0d0d0;
    font-size: 16px;
}
.task-apps {
    display: flex;
    align-items: center;
    margin-left: 1px;
}
.app {
    display: flex;
    justify-content: center;
    align-items: center;
    position: relative;
    width: 55px;
    height: 50px;
}
.app-on {
    background-color: #2d2d2d;
    border-radius: 5px;
}
.app-pill {
    position: absolute;
    left: 15px;
    bottom: 1px;
    width: 24px;
    height: 4px;
    background-color: #4cc2ff;
    border-radius: 2px;
}
.app-dot {
    position: absolute;
    left: 23px;
    bottom: 1px;
    width: 8px;
    height: 4px;
    background-color: #8a8a8a;
    border-radius: 2px;
}
.todo-badge {
    position: absolute;
    top: 0;
    right: 3px;
    width: 20px;
    height: 20px;
    background-color: #4cc2ff;
    border-radius: 50%;
    color: #111;
    font-size: 12px;
    line-height: 20px;
    text-align: center;
}
.tray {
    display: flex;
    align-items: center;
    margin-left: auto;
    padding-right: 25px;
}
.tray-cloud { margin-left: 21px; }
.tray-wifi { margin-left: 19px; }
.tray-vol { margin-left: 9px; }
.tray-bat { margin-left: 11px; }
.clock {
    display: flex;
    flex-direction: column;
    align-items: flex-end;
    margin-left: 21px;
    gap: 2px;
    font-size: 14.5px;
}
```
